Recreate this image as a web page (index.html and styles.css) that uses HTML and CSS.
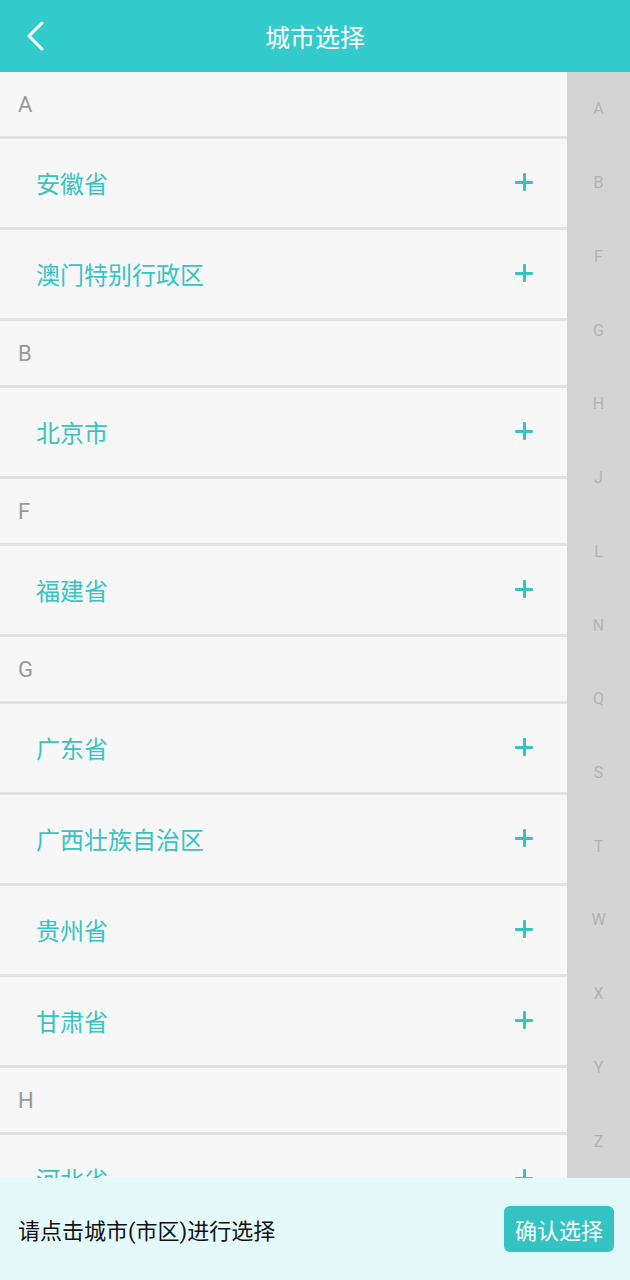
FILE: index.html
```html
<!DOCTYPE html>
<html>
	<head>
		<meta charset="utf-8">
		<title>城市选择</title>
		<link rel="stylesheet" href="styles.css">
	</head>
	<body>
		<div class="header">
			<svg class="back" width="20" height="30" viewBox="0 0 20 30">
				<path d="M17 2 L4 15 L17 28" fill="none" stroke="#fff" stroke-width="3" stroke-linecap="round" stroke-linejoin="round"/>
			</svg>
			<h1>城市选择</h1>
		</div>
		<div class="main">
			<ul class="list">
				<li class="group">A</li>
				<li class="item"><span>安徽省</span><i class="plus"></i></li>
				<li class="item"><span>澳门特别行政区</span><i class="plus"></i></li>
				<li class="group">B</li>
				<li class="item"><span>北京市</span><i class="plus"></i></li>
				<li class="group">F</li>
				<li class="item"><span>福建省</span><i class="plus"></i></li>
				<li class="group">G</li>
				<li class="item"><span>广东省</span><i class="plus"></i></li>
				<li class="item"><span>广西壮族自治区</span><i class="plus"></i></li>
				<li class="item"><span>贵州省</span><i class="plus"></i></li>
				<li class="item"><span>甘肃省</span><i class="plus"></i></li>
				<li class="group">H</li>
				<li class="item"><span>河北省</span><i class="plus"></i></li>
			</ul>
			<ul class="index">
				<li>A</li><li>B</li><li>F</li><li>G</li><li>H</li>
				<li>J</li><li>L</li><li>N</li><li>Q</li><li>S</li>
				<li>T</li><li>W</li><li>X</li><li>Y</li><li>Z</li>
			</ul>
		</div>
		<div class="footer">
			<p>请点击城市(市区)进行选择</p>
			<button class="confirm">确认选择</button>
		</div>
	</body>
</html>
```
FILE: styles.css
```css
body, ul, li, h1, p{
	margin: 0;
	padding: 0;
}
body{
	width: 630px;
	height: 1280px;
	overflow: hidden;
	font-family: Roboto, "Noto Sans CJK SC", sans-serif;
	background: #f7f7f7;
}
ul{
	list-style: none;
}
.header{
	height: 72px;
	background: #33cbcb;
	display: flex;
	align-items: center;
	justify-content: center;
	position: relative;
}
.back{
	position: absolute;
	left: 25px;
	top: 21px;
}
.header h1{
	font-size: 25px;
	font-weight: normal;
	color: #fff;
}
.main{
	height: 1106px;
	display: flex;
	overflow: hidden;
}
.list{
	flex: 1;
	overflow: hidden;
}
.list li{
	border-bottom: 3px solid #e2e2e2;
	display: flex;
	align-items: center;
}
.group{
	height: 64px;
	padding-left: 18px;
	font-size: 22px;
	color: #999;
}
.item{
	height: 86px;
	padding: 0 34px 2px 36px;
	justify-content: space-between;
	font-size: 24px;
	color: #38c3c3;
}
.plus{
	width: 18px;
	height: 18px;
	position: relative;
}
.plus::before, .plus::after{
	content: "";
	position: absolute;
	background: #38c3c3;
	border-radius: 1px;
}
.plus::before{
	left: 0;
	top: 7.5px;
	width: 18px;
	height: 3px;
}
.plus::after{
	left: 7.5px;
	top: 0;
	width: 3px;
	height: 18px;
}
.index{
	width: 63px;
	background: #d4d4d4;
	display: flex;
	flex-direction: column;
}
.index li{
	flex: 1;
	display: flex;
	align-items: center;
	justify-content: center;
	font-size: 16px;
	color: #b3b3b3;
}
.footer{
	height: 102px;
	background: #e4f9f9;
	display: flex;
	align-items: center;
	justify-content: space-between;
	padding: 0 16px 0 18px;
}
.footer p{
	font-size: 22px;
	color: #111;
}
.confirm{
	width: 110px;
	height: 46px;
	border: none;
	border-radius: 6px;
	background: #33c3c3;
	color: #fff;
	font-size: 22px;
	font-family: Roboto, "Noto Sans CJK SC", sans-serif;
	padding: 0;
}
```
